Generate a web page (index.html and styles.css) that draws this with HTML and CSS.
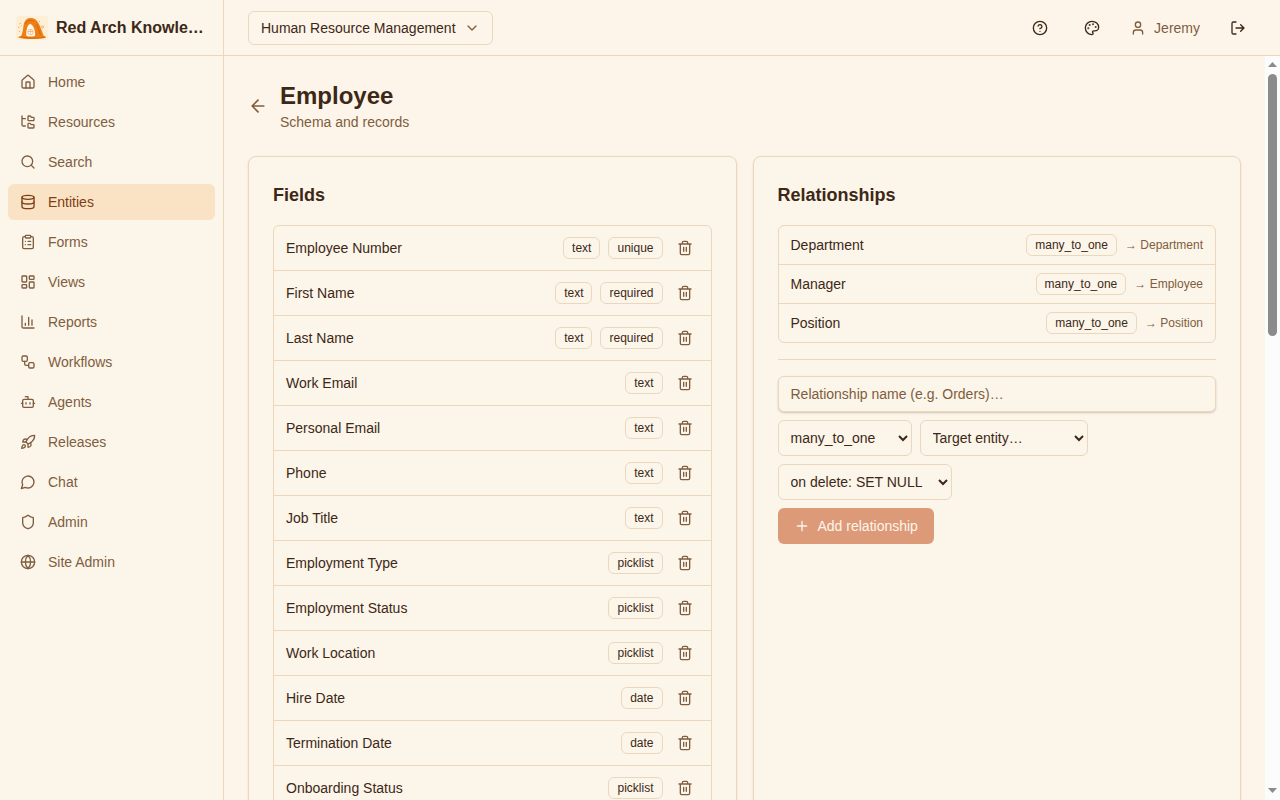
FILE: index.html
```html
<!DOCTYPE html>
<html lang="en">
<head>
  <meta charset="UTF-8">
  <meta name="viewport" content="width=device-width, initial-scale=1.0">
  <title>Employee</title>
  <link rel="stylesheet" href="styles.css">
</head>
<body>

<svg class="sprite" xmlns="http://www.w3.org/2000/svg">
  <symbol id="trash" viewBox="0 0 24 24"><path d="M3 6h18M19 6v14c0 1-1 2-2 2H7c-1 0-2-1-2-2V6M8 6V4c0-1 1-2 2-2h4c1 0 2 1 2 2v2M10 11v6M14 11v6"/></symbol>
</svg>

<div class="app">
  <aside class="sidebar">
    <div class="brand">
      <svg class="logo" viewBox="0 0 32 24">
        <rect width="32" height="24" rx="3" fill="#fcefd6"/>
        <path d="M2 21.500c1-1.500 2.500-1.200 3.500-2 1-3 1.500-6 2-9.500C8 5.500 10.500 2 14.500 2c4 0 6 1.500 7.500 4.500 1.500 2.500 2.500 4.500 3.500 7.500l2 5.500c1 .5 2 .8 2.500 1.800-.5 1.400-5 1-8 1.500-6 .6-14 .4-20-1.300z" fill="#ee7f15"/>
        <path d="M10.500 20c-.8-3 .2-11 3.700-12.200C17.500 9 19.500 15 19 20c-3 .8-6 .8-8.500 0z" fill="#fff8ea"/>
        <path d="M9.500 8c1.500-3.500 5-4.500 8-3M20.500 8c1.500 3.500 3 7 4 11M5 21c8 1.500 16 1.500 23 .3" stroke="#d4680f" stroke-width="1" fill="none"/>
        <path d="M12 14.500c1-1.500 4.500-1.500 5 0v3c-1 1.500-4 1.500-5 0zM12 15.500h5M14.500 13.500v4" stroke="#e9b078" stroke-width=".8" fill="none"/>
        <path d="M3.500 8l1.500-1M2 11l1 1M4.500 10.500l1-1M3 16l1-1M23 6l1-1M26.500 10a1 1 0 1 0 .1 0" stroke="#f0a765" stroke-width="1" fill="none"/>
      </svg>
      <span>Red Arch Knowle…</span>
    </div>
    <nav class="nav">
      <a class="nav-item"><svg class="icon" viewBox="0 0 24 24"><path d="M15 21v-8a1 1 0 0 0-1-1h-4a1 1 0 0 0-1 1v8"/><path d="M3 10a2 2 0 0 1 .709-1.528l7-5.999a2 2 0 0 1 2.582 0l7 5.999A2 2 0 0 1 21 10v9a2 2 0 0 1-2 2H5a2 2 0 0 1-2-2z"/></svg>Home</a>
      <a class="nav-item"><svg class="icon" viewBox="0 0 24 24"><path d="M20 10a1 1 0 0 0 1-1V6a1 1 0 0 0-1-1h-2.500a1 1 0 0 1-.8-.4l-.9-1.200A1 1 0 0 0 15 3h-2a1 1 0 0 0-1 1v5a1 1 0 0 0 1 1Z"/><path d="M20 21a1 1 0 0 0 1-1v-3a1 1 0 0 0-1-1h-2.900a1 1 0 0 1-.88-.55l-.42-.85a1 1 0 0 0-.92-.6H13a1 1 0 0 0-1 1v5a1 1 0 0 0 1 1Z"/><path d="M3 5a2 2 0 0 0 2 2h3M3 3v13a2 2 0 0 0 2 2h3"/></svg>Resources</a>
      <a class="nav-item"><svg class="icon" viewBox="0 0 24 24"><circle cx="11" cy="11" r="8"/><path d="m21 21-4.300-4.300"/></svg>Search</a>
      <a class="nav-item active"><svg class="icon" viewBox="0 0 24 24"><ellipse cx="12" cy="5" rx="9" ry="3"/><path d="M3 5v14a9 3 0 0 0 18 0V5"/><path d="M3 12a9 3 0 0 0 18 0"/></svg>Entities</a>
      <a class="nav-item"><svg class="icon" viewBox="0 0 24 24"><rect width="8" height="4" x="8" y="2" rx="1"/><path d="M16 4h2a2 2 0 0 1 2 2v14a2 2 0 0 1-2 2H6a2 2 0 0 1-2-2V6a2 2 0 0 1 2-2h2M12 11h4M12 16h4M8 11h.01M8 16h.01"/></svg>Forms</a>
      <a class="nav-item"><svg class="icon" viewBox="0 0 24 24"><rect width="7" height="9" x="3" y="3" rx="1"/><rect width="7" height="5" x="14" y="3" rx="1"/><rect width="7" height="9" x="14" y="12" rx="1"/><rect width="7" height="5" x="3" y="16" rx="1"/></svg>Views</a>
      <a class="nav-item"><svg class="icon" viewBox="0 0 24 24"><path d="M3 3v16a2 2 0 0 0 2 2h16M18 17V9M13 17V5M8 17v-3"/></svg>Reports</a>
      <a class="nav-item"><svg class="icon" viewBox="0 0 24 24"><rect width="8" height="8" x="3" y="3" rx="2"/><path d="M7 11v4a2 2 0 0 0 2 2h4"/><rect width="8" height="8" x="13" y="13" rx="2"/></svg>Workflows</a>
      <a class="nav-item"><svg class="icon" viewBox="0 0 24 24"><path d="M12 8V4H8"/><rect width="16" height="12" x="4" y="8" rx="2"/><path d="M2 14h2M20 14h2M15 13v2M9 13v2"/></svg>Agents</a>
      <a class="nav-item"><svg class="icon" viewBox="0 0 24 24"><path d="M4.500 16.500c-1.500 1.260-2 5-2 5s3.740-.5 5-2c.71-.84.7-2.130-.09-2.910a2.180 2.180 0 0 0-2.910-.09z"/><path d="m12 15-3-3a22 22 0 0 1 2-3.950A12.880 12.880 0 0 1 22 2c0 2.720-.78 7.500-6 11a22.350 22.350 0 0 1-4 2z"/><path d="M9 12H4s.55-3.030 2-4c1.620-1.080 5 0 5 0M12 15v5s3.030-.55 4-2c1.080-1.620 0-5 0-5"/></svg>Releases</a>
      <a class="nav-item"><svg class="icon" viewBox="0 0 24 24"><path d="M7.900 20A9 9 0 1 0 4 16.100L2 22Z"/></svg>Chat</a>
      <a class="nav-item"><svg class="icon" viewBox="0 0 24 24"><path d="M20 13c0 5-3.500 7.500-7.660 8.950a1 1 0 0 1-.67-.01C7.500 20.500 4 18 4 13V6a1 1 0 0 1 1-1c2 0 4.500-1.200 6.240-2.720a1.170 1.170 0 0 1 1.520 0C14.510 3.810 17 5 19 5a1 1 0 0 1 1 1z"/></svg>Admin</a>
      <a class="nav-item"><svg class="icon" viewBox="0 0 24 24"><circle cx="12" cy="12" r="10"/><path d="M12 2a14.500 14.500 0 0 0 0 20 14.500 14.500 0 0 0 0-20M2 12h20"/></svg>Site Admin</a>
    </nav>
  </aside>

  <div class="content">
    <header class="topbar">
      <button class="app-switch">Human Resource Management
        <svg class="icon muted" viewBox="0 0 24 24"><path d="m6 9 6 6 6-6"/></svg>
      </button>
      <div class="actions">
        <button class="icon-btn"><svg class="icon" viewBox="0 0 24 24"><circle cx="12" cy="12" r="10"/><path d="M9.090 9a3 3 0 0 1 5.830 1c0 2-3 3-3 3M12 17h.01"/></svg></button>
        <button class="icon-btn"><svg class="icon" viewBox="0 0 24 24"><g fill="currentColor"><circle cx="13.500" cy="6.500" r=".5"/><circle cx="17.500" cy="10.500" r=".5"/><circle cx="8.500" cy="7.500" r=".5"/><circle cx="6.500" cy="12.500" r=".5"/></g><path d="M12 2C6.500 2 2 6.500 2 12s4.500 10 10 10c.926 0 1.648-.746 1.648-1.688 0-.437-.18-.835-.437-1.125-.29-.289-.438-.652-.438-1.125a1.640 1.640 0 0 1 1.668-1.668h1.996c3.051 0 5.555-2.503 5.555-5.554C21.965 6.012 17.461 2 12 2z"/></svg></button>
        <a class="user"><svg class="icon" viewBox="0 0 24 24"><path d="M19 21v-2a4 4 0 0 0-4-4H9a4 4 0 0 0-4 4v2"/><circle cx="12" cy="7" r="4"/></svg>Jeremy</a>
        <button class="icon-btn"><svg class="icon" viewBox="0 0 24 24"><path d="M9 21H5a2 2 0 0 1-2-2V5a2 2 0 0 1 2-2h4M16 17l5-5-5-5M21 12H9"/></svg></button>
      </div>
    </header>

    <div class="scroll-area">
      <main class="main">
        <div class="page-head">
          <svg class="icon back" viewBox="0 0 24 24"><path d="m12 19-7-7 7-7M19 12H5"/></svg>
          <div>
            <h1>Employee</h1>
            <p>Schema and records</p>
          </div>
        </div>

        <div class="cards">
          <section class="card">
            <h2>Fields</h2>
            <ul class="list">
              <li><span class="name">Employee Number</span><span class="badge">text</span><span class="badge">unique</span><button class="del"><svg class="icon"><use href="#trash"/></svg></button></li>
              <li><span class="name">First Name</span><span class="badge">text</span><span class="badge">required</span><button class="del"><svg class="icon"><use href="#trash"/></svg></button></li>
              <li><span class="name">Last Name</span><span class="badge">text</span><span class="badge">required</span><button class="del"><svg class="icon"><use href="#trash"/></svg></button></li>
              <li><span class="name">Work Email</span><span class="badge">text</span><button class="del"><svg class="icon"><use href="#trash"/></svg></button></li>
              <li><span class="name">Personal Email</span><span class="badge">text</span><button class="del"><svg class="icon"><use href="#trash"/></svg></button></li>
              <li><span class="name">Phone</span><span class="badge">text</span><button class="del"><svg class="icon"><use href="#trash"/></svg></button></li>
              <li><span class="name">Job Title</span><span class="badge">text</span><button class="del"><svg class="icon"><use href="#trash"/></svg></button></li>
              <li><span class="name">Employment Type</span><span class="badge">picklist</span><button class="del"><svg class="icon"><use href="#trash"/></svg></button></li>
              <li><span class="name">Employment Status</span><span class="badge">picklist</span><button class="del"><svg class="icon"><use href="#trash"/></svg></button></li>
              <li><span class="name">Work Location</span><span class="badge">picklist</span><button class="del"><svg class="icon"><use href="#trash"/></svg></button></li>
              <li><span class="name">Hire Date</span><span class="badge">date</span><button class="del"><svg class="icon"><use href="#trash"/></svg></button></li>
              <li><span class="name">Termination Date</span><span class="badge">date</span><button class="del"><svg class="icon"><use href="#trash"/></svg></button></li>
              <li><span class="name">Onboarding Status</span><span class="badge">picklist</span><button class="del"><svg class="icon"><use href="#trash"/></svg></button></li>
            </ul>
          </section>

          <section class="card">
            <h2>Relationships</h2>
            <ul class="list">
              <li><span class="name">Department</span><span class="badge">many_to_one</span><span class="target">→ Department</span></li>
              <li><span class="name">Manager</span><span class="badge">many_to_one</span><span class="target">→ Employee</span></li>
              <li><span class="name">Position</span><span class="badge">many_to_one</span><span class="target">→ Position</span></li>
            </ul>
            <form class="rel-form">
              <input type="text" placeholder="Relationship name (e.g. Orders)…">
              <div class="selects">
                <select class="kind"><option>many_to_one</option></select>
                <select class="entity"><option>Target entity…</option></select>
                <select class="on-delete"><option>on delete: SET NULL</option></select>
              </div>
              <button class="add" type="button" disabled>
                <svg class="icon" viewBox="0 0 24 24"><path d="M5 12h14M12 5v14"/></svg>
                Add relationship
              </button>
            </form>
          </section>
        </div>
      </main>
      <div class="scrollbar">
        <svg class="arrow" viewBox="0 0 9 5"><path d="M4.500 0 9 5H0z"/></svg>
        <div class="thumb"></div>
        <svg class="arrow down" viewBox="0 0 9 5"><path d="M0 0h9L4.500 5z"/></svg>
      </div>
    </div>
  </div>
</div>

</body>
</html>
```
FILE: styles.css
```css
:root {
  --bg: #fdf5e9;
  --card: #fcf5e9;
  --border: #ebd8bc;
  --text: #3d2817;
  --muted: #7f5d40;
}

* {
  box-sizing: border-box;
}

body {
  margin: 0;
  font-family: "Liberation Sans", Arial, sans-serif;
  font-size: 14px;
  line-height: 20px;
  color: var(--text);
  background: var(--bg);
}

h1, h2, p, ul {
  margin: 0;
  padding: 0;
}

button, input, select {
  font: inherit;
  color: inherit;
}

button {
  background: none;
  border: none;
  padding: 0;
}

.sprite {
  display: none;
}

.icon {
  width: 16px;
  height: 16px;
  flex-shrink: 0;
  fill: none;
  stroke: currentColor;
  stroke-width: 2;
  stroke-linecap: round;
  stroke-linejoin: round;
}

.muted {
  color: var(--muted);
}

.app {
  display: flex;
  height: 100vh;
  overflow: hidden;
}

/* sidebar */
.sidebar {
  width: 224px;
  flex-shrink: 0;
  background: var(--card);
  border-right: 1px solid var(--border);
}

.brand {
  display: flex;
  align-items: center;
  gap: 8px;
  height: 56px;
  padding: 0 16px;
  border-bottom: 1px solid var(--border);
  font-size: 16px;
  line-height: 24px;
  font-weight: bold;
}

.brand span {
  white-space: nowrap;
}

.logo {
  width: 32px;
  height: 24px;
  flex-shrink: 0;
}

.nav {
  display: flex;
  flex-direction: column;
  gap: 4px;
  padding: 8px;
}

.nav-item {
  display: flex;
  align-items: center;
  gap: 12px;
  height: 36px;
  padding: 0 12px;
  border-radius: 6px;
  color: var(--muted);
}

.nav-item.active {
  background: #fae2c5;
  color: #7c3f14;
}

/* top bar */
.content {
  flex: 1;
  min-width: 0;
  display: flex;
  flex-direction: column;
}

.topbar {
  display: flex;
  align-items: center;
  justify-content: space-between;
  height: 56px;
  flex-shrink: 0;
  padding: 0 24px;
  border-bottom: 1px solid var(--border);
}

.app-switch {
  display: flex;
  align-items: center;
  gap: 8px;
  height: 34px;
  padding: 0 12px;
  border: 1px solid var(--border);
  border-radius: 6px;
}

.actions {
  display: flex;
  align-items: center;
  gap: 16px;
}

.icon-btn {
  display: flex;
  align-items: center;
  justify-content: center;
  width: 36px;
  height: 36px;
}

.user {
  display: flex;
  align-items: center;
  gap: 8px;
  padding: 0 4px;
  color: var(--muted);
}

/* page */
.scroll-area {
  flex: 1;
  min-height: 0;
  display: flex;
}

.main {
  flex: 1;
  min-width: 0;
  padding: 24px;
  overflow: hidden;
}

.scrollbar {
  display: flex;
  flex-direction: column;
  align-items: center;
  width: 15px;
  flex-shrink: 0;
  padding: 6px 0 7px;
  background: #fcfcfc;
}

.arrow {
  width: 9px;
  height: 5px;
  fill: #8b8b8b;
}

.arrow.down {
  margin-top: auto;
}

.thumb {
  width: 9px;
  height: 262px;
  margin-top: 7px;
  border-radius: 5px;
  background: #8b8b8b;
}

.page-head {
  display: flex;
  align-items: center;
  gap: 12px;
  margin-bottom: 24px;
  color: var(--muted);
}

.page-head h1 {
  font-size: 24px;
  line-height: 32px;
  color: var(--text);
}

.back {
  width: 20px;
  height: 20px;
}

.cards {
  display: grid;
  grid-template-columns: 1fr 1fr;
  gap: 16px;
  min-height: 1896px;
}

.card {
  padding: 24px;
  background: var(--card);
  border: 1px solid var(--border);
  border-radius: 8px;
  box-shadow: 0 1px 2px rgba(120, 70, 20, 0.18);
}

.card h2 {
  margin-bottom: 16px;
  font-size: 18px;
  line-height: 28px;
}

.list {
  list-style: none;
  border: 1px solid var(--border);
  border-radius: 6px;
}

.list li {
  display: flex;
  align-items: center;
  gap: 8px;
  padding: 8px 12px;
}

.list li + li {
  border-top: 1px solid var(--border);
}

.name {
  flex: 1;
}

.badge {
  padding: 2px 8px;
  border: 1px solid var(--border);
  border-radius: 6px;
  font-size: 12px;
  line-height: 16px;
}

.target {
  font-size: 12px;
  line-height: 16px;
  color: var(--muted);
}

.del {
  display: flex;
  align-items: center;
  justify-content: center;
  width: 28px;
  height: 28px;
  color: var(--muted);
}

/* relationship form */
.rel-form {
  display: flex;
  flex-direction: column;
  align-items: flex-start;
  gap: 8px;
  margin-top: 16px;
  padding-top: 16px;
  border-top: 1px solid var(--border);
}

.rel-form input,
.rel-form select {
  height: 36px;
  border: 1px solid var(--border);
  border-radius: 6px;
  background: var(--card);
}

.rel-form input {
  width: 100%;
  padding: 0 12px;
  box-shadow: 0 1px 2px rgba(90, 60, 30, 0.25);
}

.rel-form input::placeholder {
  color: var(--muted);
}

.rel-form select {
  padding: 0 0 0 8px;
}

.selects {
  display: flex;
  flex-wrap: wrap;
  gap: 8px;
}

.kind {
  width: 134px;
}

.entity {
  width: 168px;
}

.on-delete {
  width: 174px;
}

.add {
  display: flex;
  align-items: center;
  gap: 8px;
  height: 36px;
  padding: 0 16px;
  border-radius: 6px;
  background: #c5501d;
  color: #fdf6ea;
  opacity: 0.55;
}
```
